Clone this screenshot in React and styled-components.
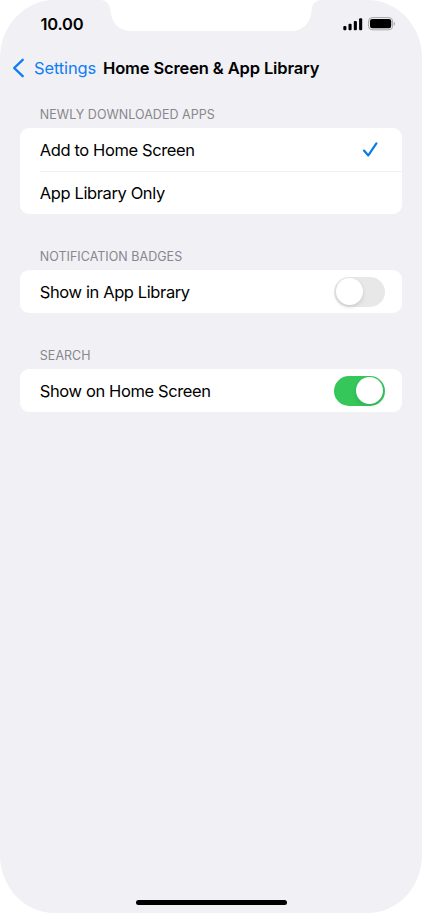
import React from "react";
import styled, { createGlobalStyle } from "styled-components";

const GlobalStyle = createGlobalStyle`
  * { box-sizing: border-box; }
  body { margin: 0; background: #fff; }
`;

const Phone = styled.main`
  position: relative;
  display: flex;
  flex-direction: column;
  width: 422px;
  height: 913px;
  overflow: hidden;
  border-radius: 54px / 58px;
  background: #f1f0f5;
  color: #000;
  font-family: Inter, "Liberation Sans", sans-serif;
`;

const Notch = styled.svg`
  position: absolute;
  top: 0;
  left: 100px;
  width: 222px;
  height: 31px;
`;

const StatusBar = styled.header`
  display: flex;
  align-items: center;
  justify-content: space-between;
  height: 48px;
  padding: 0 26px 0 40.5px;
`;

const Time = styled.span`
  font-size: 16.5px;
  font-weight: 600;
  line-height: 20px;
  letter-spacing: -0.2px;
`;

const StatusIcons = styled.div`
  display: flex;
  align-items: center;
  gap: 5px;
`;

const NavBar = styled.nav`
  display: flex;
  align-items: center;
  height: 40px;
  padding-left: 12px;
`;

const BackButton = styled.button`
  display: flex;
  align-items: center;
  gap: 9px;
  width: 91px;
  padding: 0;
  border: 0;
  background: none;
  color: #0f7df5;
  font: 400 16.5px/22px Inter, "Liberation Sans", sans-serif;
  letter-spacing: -0.12px;
  white-space: nowrap;
`;

const Title = styled.h1`
  margin: 0;
  font-size: 16.5px;
  font-weight: 600;
  line-height: 22px;
  letter-spacing: -0.13px;
  white-space: nowrap;
`;

const Content = styled.div`
  display: flex;
  flex-direction: column;
  gap: 35px;
  flex: 1;
  padding: 19px 19.6px 0 19.8px;
`;

const Section = styled.section`
  display: flex;
  flex-direction: column;
`;

const SectionTitle = styled.h2`
  margin: 0;
  padding: 0 20px 5px;
  color: #88878c;
  font-size: 12.5px;
  font-weight: 400;
  line-height: 16px;
  letter-spacing: 0.03px;
`;

const Group = styled.div`
  overflow: hidden;
  border-radius: 9px;
  background: #fff;
`;

const Row = styled.div`
  display: flex;
  align-items: center;
  justify-content: space-between;
  height: 43px;
  margin-left: 20px;
  padding-right: ${(p) => p.$end || 17.6}px;
  font-size: 16.5px;
  line-height: 22px;
  letter-spacing: -0.39px;

  & + & {
    border-top: 1px solid #f0f0f2;
  }
`;

const Switch = styled.button`
  display: flex;
  justify-content: ${(p) => (p.$on ? "flex-end" : "flex-start")};
  width: 50.8px;
  height: 30px;
  padding: 1.5px;
  border: 0;
  border-radius: 15px;
  background: ${(p) => (p.$on ? "#35c75a" : "#e8e8e9")};
`;

const Knob = styled.span`
  width: 27px;
  height: 27px;
  border-radius: 50%;
  background: #fff;
  box-shadow: 0 2px 4px rgba(0, 0, 0, 0.13);
`;

const HomeIndicator = styled.div`
  align-self: center;
  width: 151px;
  height: 5px;
  margin-bottom: 8px;
  border-radius: 3px;
  background: #000;
`;

function Signal() {
  return (
    <svg width="20" height="13" viewBox="0 0 20 13">
      <rect x="0.3" y="8" width="3.1" height="4.2" rx="1" />
      <rect x="5.5" y="5.8" width="3.1" height="6.4" rx="1" />
      <rect x="10.8" y="3.1" width="3.1" height="9.1" rx="1" />
      <rect x="16.1" y="0.3" width="3.1" height="11.9" rx="1" />
    </svg>
  );
}

function Battery() {
  return (
    <svg width="28" height="14" viewBox="0 0 28 14">
      <rect x="0.6" y="0.6" width="24" height="12.2" rx="3.6" fill="none" stroke="#a7a6aa" />
      <rect x="2" y="2.1" width="21.2" height="9.2" rx="2.2" />
      <path d="M25.8 4.8v4c1.5-.6 1.5-3.4 0-4Z" fill="#a0a0a4" />
    </svg>
  );
}

function Chevron() {
  return (
    <svg width="13" height="20" viewBox="0 0 13 20">
      <path d="M10.7 1.8 2.2 10l8.5 8.2" fill="none" stroke="currentColor" strokeWidth="2.4" strokeLinecap="round" strokeLinejoin="round" />
    </svg>
  );
}

function Check() {
  return (
    <svg width="17" height="17" viewBox="0 0 17 17">
      <path d="m2 9.6 4.3 4.8L14.4 2.4" fill="none" stroke="#087be7" strokeWidth="2.2" strokeLinecap="round" strokeLinejoin="round" />
    </svg>
  );
}

function Toggle({ on, label }) {
  return (
    <Switch $on={on} role="switch" aria-checked={on} aria-label={label}>
      <Knob />
    </Switch>
  );
}

export default function App() {
  return (
    <>
      <GlobalStyle />
      <Phone>
        <Notch viewBox="0 0 222 31">
          <path d="M0 0C7 0 9.5 4 10.3 10C11.4 23 19 31 32 31H191C203 31 210.5 23 211.5 11C212 4 215 0 222 0Z" fill="#fff" />
        </Notch>
        <StatusBar>
          <Time>10.00</Time>
          <StatusIcons>
            <Signal />
            <Battery />
          </StatusIcons>
        </StatusBar>
        <NavBar>
          <BackButton><Chevron />Settings</BackButton>
          <Title>Home Screen &amp; App Library</Title>
        </NavBar>
        <Content>
          <Section>
            <SectionTitle>NEWLY DOWNLOADED APPS</SectionTitle>
            <Group>
              <Row $end={23}>Add to Home Screen<Check /></Row>
              <Row>App Library Only</Row>
            </Group>
          </Section>
          <Section>
            <SectionTitle>NOTIFICATION BADGES</SectionTitle>
            <Group>
              <Row>Show in App Library<Toggle label="Show in App Library" on={false} /></Row>
            </Group>
          </Section>
          <Section>
            <SectionTitle>SEARCH</SectionTitle>
            <Group>
              <Row>Show on Home Screen<Toggle label="Show on Home Screen" on /></Row>
            </Group>
          </Section>
        </Content>
        <HomeIndicator />
      </Phone>
    </>
  );
}
